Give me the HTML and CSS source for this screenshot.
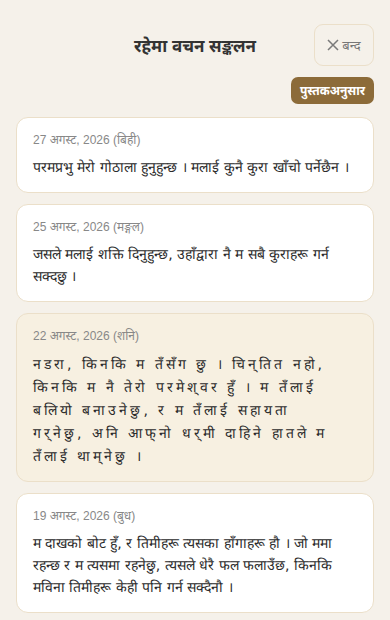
FILE: index.html
```html
<!DOCTYPE html>
<html lang="ne">
<head>
    <meta charset="UTF-8">
    <meta name="viewport" content="width=device-width, initial-scale=1.0">
    <title>रहेमा वचन सङ्कलन</title>
    <link rel="stylesheet" href="styles.css">
</head>
<body>
    <div id="page">
        <div class="header">
            <span class="spacer"></span>
            <h1 class="title">रहेमा वचन सङ्कलन</h1>
            <button class="close-btn">
                <svg width="12" height="12" viewBox="0 0 12 12"><path d="M1 1 L11 11 M11 1 L1 11" stroke="#7a7a7a" stroke-width="1.5" fill="none"/></svg>
                <span>बन्द</span>
            </button>
        </div>

        <div class="tag-row">
            <span class="tag">पुस्तकअनुसार</span>
        </div>

        <div class="verse-list">
            <div class="verse-card">
                <div class="verse-date">27 अगस्ट, 2026 (बिही)</div>
                <p class="verse-text">परमप्रभु मेरो गोठाला हुनुहुन्छ । मलाई कुनै कुरा खाँचो पर्नेछैन ।</p>
            </div>
            <div class="verse-card">
                <div class="verse-date">25 अगस्ट, 2026 (मङ्गल)</div>
                <p class="verse-text">जसले मलाई शक्ति दिनुहुन्छ, उहाँद्वारा नै म सबै कुराहरू गर्न सक्दछु ।</p>
            </div>
            <div class="verse-card today">
                <div class="verse-date">22 अगस्ट, 2026 (शनि)</div>
                <p class="verse-text spaced">नडरा, किनकि म तँसँग छु । चिन्&zwnj;तित नहो, किनकि म नै तेरो परमेश्&zwnj;वर हुँ । म तँलाई बलियो बनाउनेछु, र म तँलाई सहायता<br>गर्&zwnj;नेछु, अनि आफ्&zwnj;नो धर्&zwnj;मी दाहिने हातले म तँलाई थाम्&zwnj;नेछु ।</p>
            </div>
            <div class="verse-card">
                <div class="verse-date">19 अगस्ट, 2026 (बुध)</div>
                <p class="verse-text">म दाखको बोट हुँ, र तिमीहरू त्यसका हाँगाहरू हौ । जो ममा रहन्छ र म त्यसमा रहनेछु, त्यसले धेरै फल फलाउँछ, किनकि मविना तिमीहरू केही पनि गर्न सक्दैनौ ।</p>
            </div>
        </div>
    </div>
</body>
</html>
```

FILE: styles.css
```css
body {
    margin: 0;
    background-color: #f5f1ea;
    font-family: "Liberation Sans", "Noto Sans", sans-serif;
    color: #2b2b2b;
}
#page {
    padding: 24px 16px 16px;
}
.header {
    display: grid;
    grid-template-columns: 60px 1fr 60px;
    align-items: center;
}
.title {
    margin: 0;
    text-align: center;
    font-size: 17px;
    font-weight: bold;
    color: #333;
}
.close-btn {
    height: 42px;
    width: 60px;
    display: flex;
    align-items: center;
    justify-content: center;
    gap: 3px;
    background: transparent;
    border: 1px solid #ebdfc9;
    border-radius: 9px;
    color: #777;
    font-family: inherit;
    font-size: 13px;
    padding: 0;
}
.tag-row {
    display: flex;
    justify-content: flex-end;
    margin-top: 11px;
}
.tag {
    background-color: #8c6b39;
    color: #fff;
    font-size: 12px;
    font-weight: bold;
    padding: 5px 9px;
    border-radius: 7px;
}
.verse-list {
    display: flex;
    flex-direction: column;
    gap: 11px;
    margin-top: 13px;
}
.verse-card {
    background-color: #fff;
    border: 1px solid #ebdfc9;
    border-radius: 12px;
    padding: 13px 16px 14px;
}
.verse-card.today {
    background-color: #f7f0e1;
    padding-bottom: 13px;
}
.verse-date {
    font-size: 12px;
    color: #888;
    line-height: 18px;
}
.verse-text {
    margin: 7px 0 0;
    font-family: "DejaVu Sans", sans-serif;
    font-size: 14px;
    line-height: 22px;
    color: #2b2b2b;
}
.verse-text.spaced {
    letter-spacing: 3px;
    line-height: 23px;
    margin-top: 8px;
}
```
